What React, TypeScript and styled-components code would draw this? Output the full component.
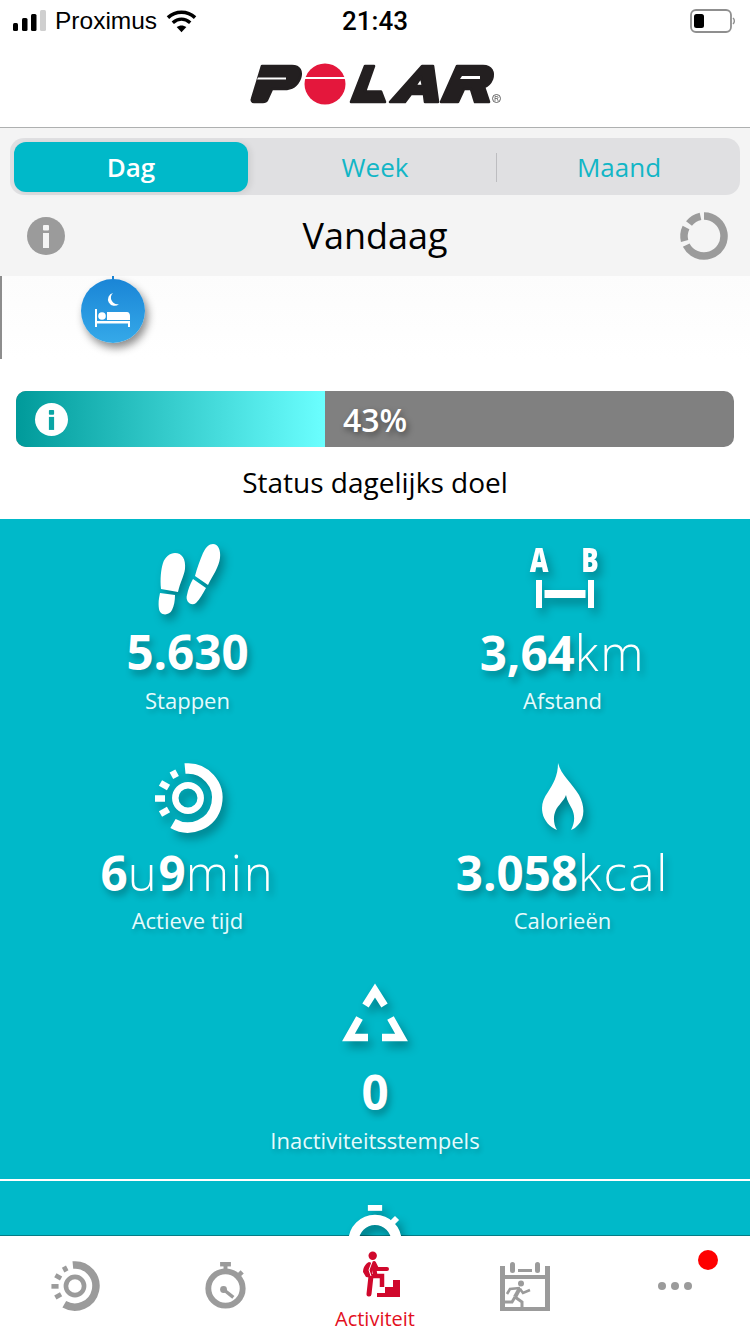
import React from "react";
import styled, { createGlobalStyle } from "styled-components";

const Global = createGlobalStyle`
  html, body { margin: 0; padding: 0; background: #fff; }
  body { font-family: "Open Sans", "Liberation Sans", sans-serif; }
  * { box-sizing: border-box; }
  svg { display: block; overflow: visible; }
`;

const TEAL = "#00b9c9";
const GREY = "#9b9b9b";

const Page = styled.div`
  width: 750px;
  height: 1334px;
  display: flex;
  flex-direction: column;
  overflow: hidden;
  background: #fff;
`;

/* Status bar */
const StatusBar = styled.div`
  height: 40px;
  flex: none;
  display: grid;
  grid-template-columns: 1fr auto 1fr;
  align-items: center;
  padding: 2px 13px 0;
  font-family: "Liberation Sans", sans-serif;
  color: #000;
`;
const StatusLeft = styled.div`
  display: flex;
  align-items: center;
  gap: 9px;
`;
const Carrier = styled.span`
  font-size: 24.5px;
`;
const Clock = styled.span`
  font-family: "Roboto", sans-serif;
  font-weight: 500;
  font-size: 26px;
`;
const StatusRight = styled.div`
  display: flex;
  justify-content: flex-end;
  padding-right: 2px;
`;

/* Header */
const Header = styled.header`
  height: 88px;
  flex: none;
  display: flex;
  justify-content: center;
  padding-top: 15px;
  border-bottom: 1px solid #aeb0b0;
`;

/* Toolbar */
const Toolbar = styled.section`
  height: 148px;
  flex: none;
  background: #f4f4f4;
  padding: 10px 10px 0;
`;
const Segmented = styled.div`
  height: 57px;
  background: #e0e0e2;
  border-radius: 14px;
  padding: 4px;
  display: grid;
  grid-template-columns: 234px 249px 1fr;
  align-items: center;
`;
const Segment = styled.div<{ $active?: boolean; $divider?: boolean }>`
  height: 50px;
  display: flex;
  align-items: center;
  justify-content: center;
  font-size: 26px;
  border-radius: 12px;
  padding-left: ${(p) => (p.$active ? "0" : "5px")};
  color: ${(p) => (p.$active ? "#fff" : "#12b6c6")};
  background: ${(p) => (p.$active ? TEAL : "transparent")};
  font-weight: ${(p) => (p.$active ? 600 : 400)};
  box-shadow: ${(p) => (p.$active ? "3px 1px 6px rgba(0,0,0,.08)" : "none")};
  position: relative;
  &::after {
    content: "";
    display: ${(p) => (p.$divider ? "block" : "none")};
    position: absolute;
    right: 0;
    top: 11px;
    bottom: 10px;
    width: 1px;
    background: #bdbdc0;
  }
`;
const DayRow = styled.div`
  height: 81px;
  display: grid;
  grid-template-columns: 1fr auto 1fr;
  align-items: center;
  padding: 0 12px;
`;
const DayTitle = styled.h1`
  margin: 0;
  font-size: 36px;
  font-weight: 400;
  color: #000;
`;
const StartCell = styled.div`
  padding-left: 5px;
`;
const EndCell = styled.div`
  display: flex;
  justify-content: flex-end;
`;

/* Timeline */
const Timeline = styled.div`
  height: 83px;
  flex: none;
  position: relative;
  background: linear-gradient(#fcfcfc, #fff);
  border-left: 2px solid #8d8d8d;
`;
const PinTick = styled.span`
  position: absolute;
  left: 110px;
  top: 0;
  width: 2px;
  height: 4px;
  background: #1a86d8;
`;
const Pin = styled.div`
  position: absolute;
  left: 79px;
  top: 3px;
  width: 64px;
  height: 64px;
  border-radius: 50%;
  background: linear-gradient(#1a85d6, #35a9e9);
  box-shadow: 3px 5px 8px rgba(0, 0, 0, 0.45);
  display: flex;
  align-items: center;
  justify-content: center;
`;

/* Goal */
const GoalBlock = styled.section`
  height: 160px;
  flex: none;
  padding: 32px 16px 0;
  display: flex;
  flex-direction: column;
`;
const GoalBar = styled.div`
  height: 56px;
  flex: none;
  display: flex;
  border-radius: 10px;
  overflow: hidden;
  background: #808080;
`;
const GoalFill = styled.div`
  height: 100%;
  background: linear-gradient(90deg, #009a9a, #6bffff);
  display: flex;
  align-items: center;
  padding-left: 19px;
`;
const GoalPercent = styled.span`
  align-self: center;
  margin-left: 18px;
  color: #fff;
  font-size: 32px;
  font-weight: 600;
  text-shadow: 2px 3px 6px rgba(0, 0, 0, 0.45);
`;
const GoalLabel = styled.div`
  margin-top: 16px;
  text-align: center;
  font-size: 28px;
  line-height: 38px;
  color: #000;
`;

/* Metrics */
const Metrics = styled.section`
  flex: 1;
  min-height: 0;
  overflow: hidden;
  background: ${TEAL};
  color: #fff;
  box-shadow: inset 0 -1px 0 #067c86;
`;
const MetricGrid = styled.div`
  display: grid;
  grid-template-columns: 1fr 1fr;
`;
const Metric = styled.div<{ $wide?: boolean }>`
  height: 220px;
  padding-top: 24px;
  display: flex;
  flex-direction: column;
  align-items: center;
  grid-column: ${(p) => (p.$wide ? "1 / -1" : "auto")};
`;
const IconSlot = styled.div`
  height: 70px;
  display: flex;
  justify-content: center;
  filter: drop-shadow(4px 6px 5px rgba(0, 0, 0, 0.3));
`;
const Value = styled.div`
  margin-top: 9px;
  height: 60px;
  line-height: 60px;
  font-size: 47.5px;
  font-weight: 700;
  text-shadow: 3px 5px 7px rgba(0, 0, 0, 0.28);
  white-space: nowrap;
`;
const Unit = styled.span`
  font-weight: 300;
  font-size: 49px;
  letter-spacing: 1.8px;
`;
const Label = styled.div`
  margin-top: 3px;
  line-height: 30px;
  font-size: 22px;
  color: #e6fbfd;
  text-shadow: 2px 3px 5px rgba(0, 0, 0, 0.2);
`;
const Divider = styled.hr`
  margin: 0;
  border: 0;
  height: 2px;
  background: #fff;
`;

/* Tab bar */
const TabBar = styled.nav`
  height: 98px;
  flex: none;
  display: grid;
  grid-template-columns: repeat(5, 1fr);
  background: #fff;
`;
const Tab = styled.div`
  position: relative;
  display: flex;
  flex-direction: column;
  align-items: center;
`;
const TabLabel = styled.span`
  font-size: 20px;
  line-height: 26px;
  color: #e30f1e;
`;
const Badge = styled.span`
  position: absolute;
  left: 98px;
  top: 14px;
  width: 20px;
  height: 20px;
  border-radius: 50%;
  background: #fe0000;
`;

/* Drawings */
const SignalIcon = () => (
  <svg width="33" height="22" viewBox="0 0 33 22">
    <rect x="0" y="13" width="5" height="8" rx="1.5" fill="#000" />
    <rect x="9" y="8" width="5.5" height="13" rx="1.5" fill="#000" />
    <rect x="18" y="4" width="5.5" height="17" rx="1.5" fill="#000" />
    <rect x="27" y="0" width="6" height="21" rx="1.5" fill="#cfcfcf" />
  </svg>
);

const WifiIcon = () => (
  <svg width="31" height="24" viewBox="0 0 32 24">
    <path d="M2 8.5C10 1 22 1 30 8.5" fill="none" stroke="#000" strokeWidth="3.6" />
    <path d="M7 13.8C12.5 9 19.5 9 25 13.8" fill="none" stroke="#000" strokeWidth="3.6" />
    <path d="M11 18.2C14 16 18 16 21 18.2L16 23.5Z" fill="#000" />
  </svg>
);

const BatteryIcon = () => (
  <svg width="45" height="25" viewBox="0 0 45 25">
    <rect x="1" y="1" width="40" height="22" rx="5" fill="none" stroke="#8f8f8f" strokeWidth="1.8" />
    <rect x="4" y="5" width="10" height="14" rx="2.5" fill="#000" />
    <path d="M43 9a4 4 0 0 1 0 6" fill="none" stroke="#8f8f8f" strokeWidth="1.4" />
  </svg>
);

const PolarLogo = () => (
  <svg width="270" height="60" viewBox="0 0 270 60" role="img" aria-label="Polar">
    <g fill="#231f20" stroke="#231f20" strokeWidth="2.6" strokeLinejoin="round">
      <path d="M22 11H52C60 11 62 17 60 23C57 31 51 34 44 34H32L27 45C26 47 24 47 23 47H14C12 47 11.500 45 12 44Z" />
      <path d="M125 11H134L125 36.500H141L145 47H111Z" />
      <path fillRule="evenodd" d="M182 11H193L198 47H185L184 39H171L165 47H150ZM181 22L175 31H183Z" />
      <path d="M217 11H243C252 11 254 18 252 24C250 29 247 31 244 32L249 47H235L231 34H224L218 47H201Z" />
    </g>
    <g fill="#fff">
      <path d="M18 22.500H46V24.500H17Z" />
      <path d="M222 21H240V24H220Z" />
    </g>
    <circle cx="85" cy="29" r="20.500" fill="#e4173c" />
    <rect x="62" y="22" width="46" height="2" fill="#fff" />
    <circle cx="256.500" cy="43.500" r="4" fill="none" stroke="#555" strokeWidth="0.9" />
    <path d="M255 46V41.500H257C258.500 41.500 258.500 43.500 257 43.500H255M257 43.500L258.300 46" fill="none" stroke="#555" strokeWidth="0.7" />
  </svg>
);

const InfoIcon = ({ size, bg, fg }: { size: number; bg: string; fg: string }) => (
  <svg width={size} height={size} viewBox="0 0 38 38">
    <circle cx="19" cy="19" r="19" fill={bg} />
    <rect x="16" y="8" width="6" height="5.500" rx="1" fill={fg} />
    <rect x="16" y="16" width="6" height="15" fill={fg} />
  </svg>
);

const LoadingRing = () => (
  <svg width="48" height="48" viewBox="0 0 48 48" fill="none" stroke={GREY} strokeWidth="7.500">
    <path d="M24 4A20 20 0 1 1 6.200 33.100" />
    <path d="M4.600 29A20 20 0 0 1 6 15.500" />
    <path d="M9 11.500A20 20 0 0 1 20.500 4.300" />
  </svg>
);

const BedIcon = () => (
  <svg width="44" height="52" viewBox="0 0 44 52" fill="#fff">
    <path d="M22 8A6.500 6.500 0 1 0 28 19A6.500 6.500 0 0 1 22 8Z" />
    <rect x="4" y="24" width="2" height="18" />
    <rect x="37" y="36" width="2" height="6" />
    <rect x="4" y="36" width="35" height="2.500" />
    <circle cx="11" cy="31" r="3.800" />
    <path d="M16 27H36C38 27 39 29 39 31V35H16Z" />
  </svg>
);

const StepsIcon = () => (
  <svg width="70" height="70" viewBox="0 0 70 70" fill="#fff">
    <path d="M22 10C29 10 33 16 32 26C31 33 27 40 25 49L8 46C7 36 8 26 10 20C12 14 17 10 22 10Z" />
    <path d="M7 50L22 52C22 58 21 63 19 67C16 73 7 73 6 66C5 60 6 55 7 50Z" />
    <path d="M60 1C65 1 68 7 67 15C66 24 60 32 55 42L42 33C44 25 47 17 50 10C53 4 56 1 60 1Z" />
    <path d="M40 36L53 45C50 50 47 56 43 60C38 64 32 58 34 52C35 47 37 41 40 36Z" />
  </svg>
);

const DistanceIconLabel = styled.text`
  font-family: "Open Sans", sans-serif;
  font-weight: 800;
  font-size: 34px;
  fill: #fff;
  text-anchor: middle;
`;

const DistanceIcon = () => (
  <svg width="70" height="70" viewBox="0 0 70 70" fill="#fff">
    <DistanceIconLabel transform="translate(11 29) scale(.76 1)">A</DistanceIconLabel>
    <DistanceIconLabel transform="translate(62 29) scale(.76 1)">B</DistanceIconLabel>
    <rect x="8" y="37" width="6" height="28" />
    <rect x="60" y="37" width="6" height="28" />
    <rect x="16.500" y="47" width="41" height="8" />
  </svg>
);

const ActiveTimeIcon = ({ size, color }: { size: number; color: string }) => (
  <svg width={size} height={size} viewBox="0 0 70 70" fill="none" stroke={color}>
    <path d="M32 5.600A29.500 29.500 0 1 1 20 60.500" strokeWidth="10.500" />
    <circle cx="35" cy="35" r="12.700" strokeWidth="6.500" />
    <path d="M19.500 8L23 14.500" strokeWidth="6.500" />
    <path d="M7.500 20L15.500 24.500" strokeWidth="6.500" />
    <path d="M2 35.500H12" strokeWidth="6.500" />
    <path d="M7.500 51L15.500 46.500" strokeWidth="6.500" />
  </svg>
);

const FlameIcon = () => (
  <svg width="44" height="68" viewBox="0 0 44 68" fill="#fff">
    <path d="M17 0C20 12 31 20 38 32C44 43 44 55 37 62C35 64 33 66 30 67C34 60 34 52 31 46C29 42 26 38 25 32C23 38 17 42 14.500 48C12 54 12.500 61 16 67C9 64 3 58 1.500 50C0 42 2 36 7 29C12 21 17 13 17 0Z" />
  </svg>
);

const TriangleIcon = () => (
  <svg width="70" height="64" viewBox="0 0 70 64" fill="none" stroke="#fff" strokeWidth="7.500">
    <path d="M25.500 22.500L35 7.500L44.500 22.500" />
    <path d="M19.500 35L8.500 54.500H28" />
    <path d="M50.500 35L61.500 54.500H42" />
  </svg>
);

const StopwatchIcon = ({ size, color, hand }: { size: number; color: string; hand?: boolean }) => (
  <svg width={size} height={size} viewBox="0 0 48 54" fill="none" stroke={color}>
    <rect x="18.500" y="0" width="11" height="4.500" fill={color} stroke="none" />
    {hand && <rect x="22" y="4" width="4" height="4" fill={color} stroke="none" />}
    <path d="M37.500 13.500L41 10" strokeWidth="4.500" />
    <circle cx="24" cy={hand ? 27 : 28} r={hand ? 17.5 : 16.5} strokeWidth={hand ? 6 : 8} />
    {hand && <circle cx="22" cy="28" r="3.500" fill={color} stroke="none" />}
    {hand && <path d="M22 28L32 36" strokeWidth="3.500" />}
  </svg>
);

const ActivityIcon = () => (
  <svg width="50" height="50" viewBox="0 0 50 50" stroke="#d0082c" fill="none">
    <circle cx="22.700" cy="5.700" r="4.200" fill="#d0082c" stroke="none" />
    <path d="M27 47V43H35V37H43V30H50V47Z" fill="#d0082c" stroke="none" />
    <path d="M19 12C15 14 13 18 13 22L16 27L22 28V13Z" fill="#d0082c" stroke="none" />
    <path d="M24 13L27 19H37" strokeWidth="4" strokeLinecap="round" />
    <path d="M23 13L25 24L25 26H32V37" strokeWidth="4.500" />
    <path d="M21 26L19 44" strokeWidth="5" strokeLinecap="round" />
    <path d="M22 12L19 20L21 26" stroke="#fff" strokeWidth="1" />
  </svg>
);

const CalendarIcon = () => (
  <svg width="50" height="49" viewBox="0 0 50 49" fill={GREY}>
    <path fillRule="evenodd" d="M0 4H5V13H45V4H50V49H0ZM5 17V45H45V17Z" />
    <rect x="10" y="0" width="5" height="11" rx="2.500" />
    <rect x="35" y="0" width="5" height="11" rx="2.500" />
    <rect x="18" y="7" width="14" height="3" />
    <circle cx="21" cy="21.500" r="3" />
    <g fill="none" stroke={GREY}>
      <path d="M20 26L15 35" strokeWidth="4" />
      <path d="M20 27L23 31L30 28" strokeWidth="2.600" />
      <path d="M20 26L10 27L7 32" strokeWidth="2.600" />
      <path d="M15 35L22 40V45" strokeWidth="3" />
      <path d="M15 35L12 40H5" strokeWidth="3" />
    </g>
  </svg>
);

const DotsIcon = () => (
  <svg width="36" height="10" viewBox="0 0 36 10" fill={GREY}>
    <circle cx="5" cy="5" r="4" />
    <circle cx="18" cy="5" r="4" />
    <circle cx="31" cy="5" r="4" />
  </svg>
);

const ActiveSlot = styled.div`
  margin-top: 25px;
`;
const StopSlot = styled.div`
  margin-top: 26px;
`;
const ActivitySlot = styled.div`
  margin-top: 14px;
  height: 56px;
`;
const CalendarSlot = styled.div`
  margin-top: 26px;
`;
const DotsSlot = styled.div`
  margin-top: 45px;
`;
const ClippedWatch = styled.div`
  display: flex;
  justify-content: center;
  margin-top: 24px;
  filter: drop-shadow(4px 6px 5px rgba(0, 0, 0, 0.35));
`;

export default function App() {
  return (
    <Page>
      <Global />
      <StatusBar>
        <StatusLeft>
          <SignalIcon />
          <Carrier>Proximus</Carrier>
          <WifiIcon />
        </StatusLeft>
        <Clock>21:43</Clock>
        <StatusRight>
          <BatteryIcon />
        </StatusRight>
      </StatusBar>
      <Header>
        <PolarLogo />
      </Header>
      <Toolbar>
        <Segmented>
          <Segment $active>Dag</Segment>
          <Segment $divider>Week</Segment>
          <Segment>Maand</Segment>
        </Segmented>
        <DayRow>
          <StartCell>
            <InfoIcon size={38} bg={GREY} fg="#f4f4f4" />
          </StartCell>
          <DayTitle>Vandaag</DayTitle>
          <EndCell>
            <LoadingRing />
          </EndCell>
        </DayRow>
      </Toolbar>
      <Timeline>
        <PinTick />
        <Pin>
          <BedIcon />
        </Pin>
      </Timeline>
      <GoalBlock>
        <GoalBar>
          <GoalFill style={{ width: `${(309 / 718) * 100}%` }}>
            <InfoIcon size={33} bg="#fff" fg="#0aa5a5" />
          </GoalFill>
          <GoalPercent>43%</GoalPercent>
        </GoalBar>
        <GoalLabel>Status dagelijks doel</GoalLabel>
      </GoalBlock>
      <Metrics>
        <MetricGrid>
          <Metric>
            <IconSlot>
              <StepsIcon />
            </IconSlot>
            <Value>5.630</Value>
            <Label>Stappen</Label>
          </Metric>
          <Metric>
            <IconSlot>
              <DistanceIcon />
            </IconSlot>
            <Value>
              3,64<Unit>km</Unit>
            </Value>
            <Label>Afstand</Label>
          </Metric>
          <Metric>
            <IconSlot>
              <ActiveTimeIcon size={70} color="#fff" />
            </IconSlot>
            <Value>
              6<Unit>u</Unit>9<Unit>min</Unit>
            </Value>
            <Label>Actieve tijd</Label>
          </Metric>
          <Metric>
            <IconSlot>
              <FlameIcon />
            </IconSlot>
            <Value>
              3.058<Unit>kcal</Unit>
            </Value>
            <Label>Calorieën</Label>
          </Metric>
          <Metric $wide>
            <IconSlot>
              <TriangleIcon />
            </IconSlot>
            <Value>0</Value>
            <Label>Inactiviteitsstempels</Label>
          </Metric>
        </MetricGrid>
        <Divider />
        <ClippedWatch>
          <StopwatchIcon size={70} color="#fff" />
        </ClippedWatch>
      </Metrics>
      <TabBar>
        <Tab>
          <ActiveSlot>
            <ActiveTimeIcon size={50} color={GREY} />
          </ActiveSlot>
        </Tab>
        <Tab>
          <StopSlot>
            <StopwatchIcon size={53} color={GREY} hand />
          </StopSlot>
        </Tab>
        <Tab>
          <ActivitySlot>
            <ActivityIcon />
          </ActivitySlot>
          <TabLabel>Activiteit</TabLabel>
        </Tab>
        <Tab>
          <CalendarSlot>
            <CalendarIcon />
          </CalendarSlot>
        </Tab>
        <Tab>
          <DotsSlot>
            <DotsIcon />
          </DotsSlot>
          <Badge />
        </Tab>
      </TabBar>
    </Page>
  );
}
